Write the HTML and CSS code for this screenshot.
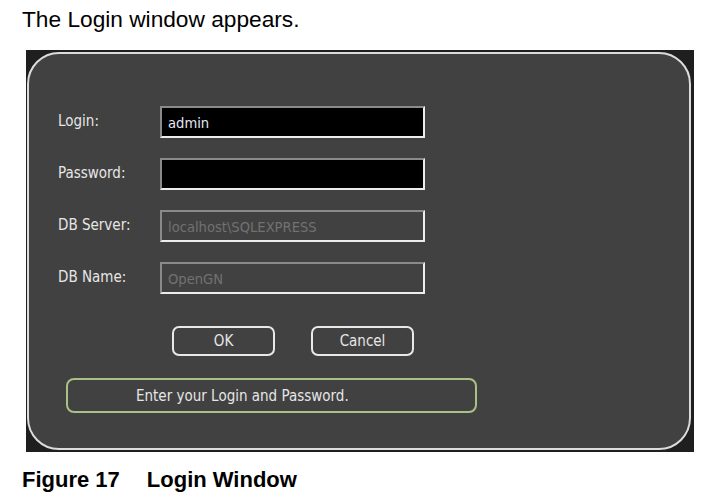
FILE: index.html
```html
<!DOCTYPE html>
<html lang="en">
<head>
    <meta charset="UTF-8">
    <title>Login Window</title>
    <link rel="stylesheet" href="styles.css">
</head>
<body>
    <p class="intro">The Login window appears.</p>

    <div class="shot">
        <div class="login-window">
            <div class="form">
                <div class="row">
                    <label for="login">Login:</label>
                    <input class="field" id="login" type="text" value="admin">
                </div>
                <div class="row">
                    <label for="password">Password:</label>
                    <input class="field" id="password" type="password">
                </div>
                <div class="row">
                    <label for="server">DB Server:</label>
                    <input class="field" id="server" type="text" value="localhost\SQLEXPRESS" disabled>
                </div>
                <div class="row">
                    <label for="dbname">DB Name:</label>
                    <input class="field" id="dbname" type="text" value="OpenGN" disabled>
                </div>
            </div>

            <div class="actions">
                <button class="btn" id="okButton">OK</button>
                <button class="btn" id="cancelButton">Cancel</button>
            </div>

            <div class="status">Enter your Login and Password.</div>
        </div>
    </div>

    <p class="caption"><span class="num">Figure 17</span>Login Window</p>
</body>
</html>
```

FILE: styles.css
```css
body {
    margin: 0;
    background-color: #fff;
    color: #000;
    font-family: 'Liberation Sans', Arial, sans-serif;
}

.intro {
    margin: 5px 0 0 22px;
    font-size: 22.7px;
    line-height: 28px;
}

.shot {
    width: 668px;
    height: 402px;
    margin: 17px 0 0 26px;
    padding: 2px 3px 2px 1px;
    box-sizing: border-box;
    background-color: #1f1f1f;
}

.login-window {
    height: 100%;
    box-sizing: border-box;
    border: 2px solid #dcdcdc;
    border-radius: 32px;
    background-color: #414141;
    padding: 52px 0 0 29px;
    font-family: 'DejaVu Sans Condensed', 'DejaVu Sans', sans-serif;
    font-size: 15px;
    color: #e6e6e6;
}

.form {
    display: flex;
    flex-direction: column;
    gap: 20px;
}

.row {
    display: flex;
    align-items: center;
}

.row label {
    width: 102px;
    margin-top: -3px;
}

.field {
    width: 265px;
    height: 32px;
    box-sizing: border-box;
    margin: 0;
    padding: 0 6px;
    border: 2px solid;
    border-color: #8a8a8a #ededed #ededed #8a8a8a;
    background-color: #000;
    color: #e4e8f4;
    font-family: 'DejaVu Sans Condensed', 'DejaVu Sans', sans-serif;
    font-size: 14.6px;
    outline: none;
}

.field:disabled {
    background-color: #414141;
    color: #717171;
}

.actions {
    display: flex;
    gap: 36px;
    margin: 32px 0 0 114px;
}

.btn {
    width: 103px;
    height: 30px;
    margin: 0;
    padding: 0;
    border: 2px solid #e8e8e8;
    border-radius: 7px;
    background-color: #414141;
    color: #e6e6e6;
    font-family: 'DejaVu Sans Condensed', 'DejaVu Sans', sans-serif;
    font-size: 15px;
}

.status {
    width: 411px;
    height: 35px;
    box-sizing: border-box;
    margin: 22px 0 0 8px;
    padding-left: 68px;
    border: 2px solid #a9c184;
    border-radius: 8px;
    display: flex;
    align-items: center;
    font-size: 15px;
}

.caption {
    margin: 15px 0 0 22px;
    font-size: 22px;
    line-height: 26px;
    font-weight: bold;
}

.caption .num {
    margin-right: 27px;
}
```
